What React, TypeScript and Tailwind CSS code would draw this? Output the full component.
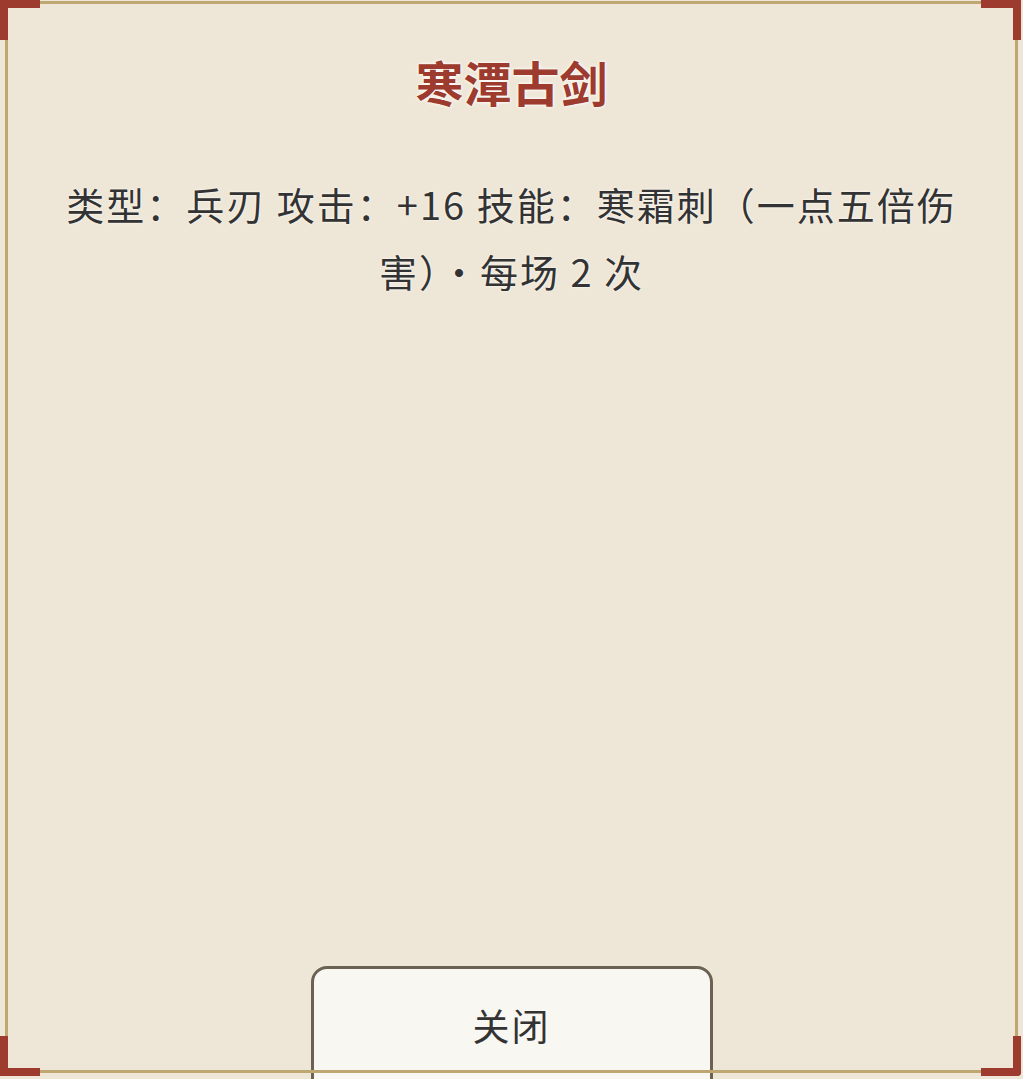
const Corner = ({ pos }: { pos: string }) => (
  <div className={`pointer-events-none absolute h-[40px] w-[40px] border-[#9c3b2e] ${pos}`} />
);

export default function App() {
  return (
    <div
      className="relative h-[1079px] w-full overflow-hidden bg-[#eee6d6]"
      style={{ fontFamily: '"Noto Sans CJK SC", "Noto Sans", sans-serif' }}
    >
      {/* frame */}
      <div className="pointer-events-none absolute left-[5px] right-[5px] top-[1px] bottom-[6px] border-[3px] border-[#bfa772]" />
      <Corner pos="left-0 top-0 border-l-[8px] border-t-[8px]" />
      <Corner pos="right-[2px] top-0 border-r-[8px] border-t-[8px]" />
      <Corner pos="left-0 bottom-[3px] border-l-[8px] border-b-[8px]" />
      <Corner pos="right-[2px] bottom-[3px] border-r-[8px] border-b-[8px] rounded-br-[4px]" />

      <div className="flex h-full flex-col items-center px-[58px] pt-[52px]">
        <h1 className="text-[48px] font-semibold leading-[58px] text-[#9c3b2e] [text-shadow:0_0_4px_#fff,0_0_2px_#fff]">
          寒潭古剑
        </h1>
        <p className="mt-[60px] text-center text-[38px] tracking-[2px] leading-[67px] text-[#333] [text-shadow:0_0_3px_#fff]">
          类型：兵刃 攻击：+16 技能：寒霜刺（一点五倍伤害）·每场 2 次
        </p>

        <div className="flex-1" />

        <button className="mb-[-30px] flex h-[143px] w-[402px] shrink-0 items-start justify-center rounded-[16px] border-[3px] border-[#6b6252] bg-[#f9f7f2] pt-[26px] text-[37px] leading-[60px] tracking-[2px] text-[#333]">
          关闭
        </button>
      </div>
    </div>
  );
}
